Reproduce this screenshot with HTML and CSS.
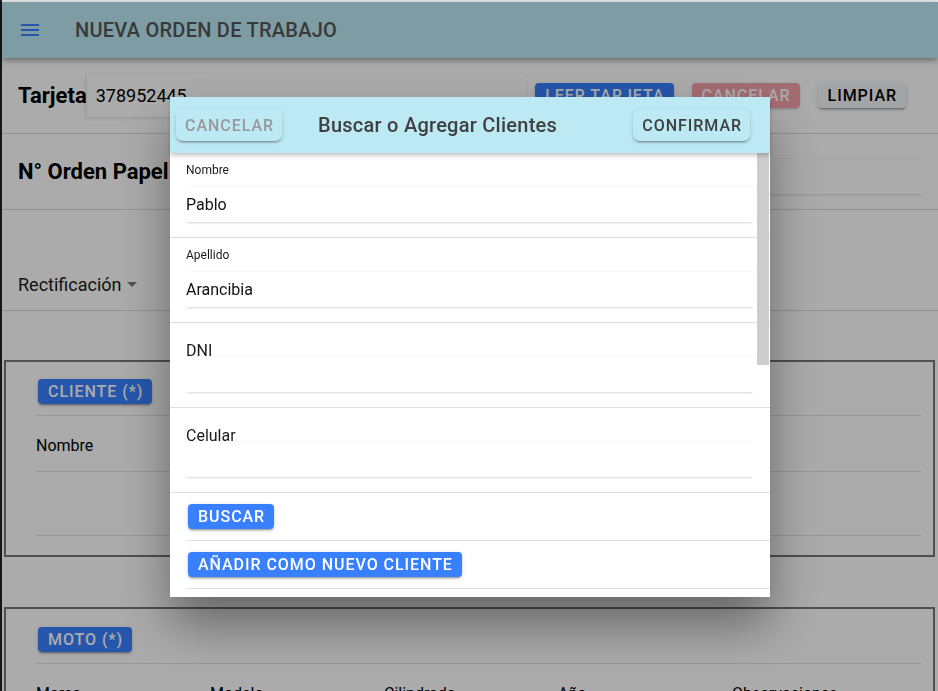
FILE: index.html
```html
<!DOCTYPE html>
<html lang="es">
<head>
<meta charset="utf-8">
<title>Nueva orden de trabajo</title>
<link rel="stylesheet" href="styles.css">
</head>
<body>
<div class="app">
  <header class="toolbar">
    <span class="menu-btn">
      <svg width="18" height="12" viewBox="0 0 18 12"><rect x="0" y="0" width="18" height="2"/><rect x="0" y="5" width="18" height="2"/><rect x="0" y="10" width="18" height="2"/></svg>
    </span>
    <h1 class="toolbar-title">NUEVA ORDEN DE TRABAJO</h1>
  </header>
  <main class="content">
    <div class="row row-tarjeta">
      <span class="row-label">Tarjeta</span>
      <div class="card-input">378952445</div>
      <div class="row-actions">
        <button class="btn btn-primary">LEER TARJETA</button>
        <button class="btn btn-danger">CANCELAR</button>
        <button class="btn btn-light">LIMPIAR</button>
      </div>
    </div>
    <div class="row row-orden">
      <span class="row-label">N° Orden Papel</span>
      <div class="line-input"></div>
    </div>
    <div class="row row-rect">
      <span class="select">Rectificación<span class="caret"></span></span>
    </div>
    <section class="panel">
      <div class="panel-head"><button class="btn btn-primary">CLIENTE (*)</button></div>
      <div class="panel-row">Nombre</div>
      <div class="panel-row panel-empty"></div>
    </section>
    <section class="panel panel-moto">
      <div class="panel-head"><button class="btn btn-primary">MOTO (*)</button></div>
      <div class="panel-cols">
        <span>Marca</span><span>Modelo</span><span>Cilindrada</span><span>Año</span><span>Observaciones</span>
      </div>
    </section>
  </main>
</div>
<div class="scrim"></div>
<div class="modal">
  <div class="modal-header">
    <button class="hbtn hbtn-muted">CANCELAR</button>
    <h2 class="modal-title">Buscar o Agregar Clientes</h2>
    <button class="hbtn">CONFIRMAR</button>
  </div>
  <div class="modal-body">
    <div class="field">
      <div class="field-label">Nombre</div>
      <div class="field-input">Pablo</div>
    </div>
    <div class="field">
      <div class="field-label">Apellido</div>
      <div class="field-input">Arancibia</div>
    </div>
    <div class="field">
      <div class="field-label field-label-empty">DNI</div>
      <div class="field-input"></div>
    </div>
    <div class="field">
      <div class="field-label field-label-empty">Celular</div>
      <div class="field-input"></div>
    </div>
    <div class="action-row"><button class="btn btn-primary">BUSCAR</button></div>
    <div class="action-row"><button class="btn btn-primary">AÑADIR COMO NUEVO CLIENTE</button></div>
    <div class="scroll-thumb"></div>
  </div>
</div>
</body>
</html>
```
FILE: styles.css
```css
* { box-sizing: border-box; }
html, body { height: 100%; overflow: hidden; }
body {
  margin: 0;
  padding-left: 2px;
  background: #222;
  font-family: Roboto, "Noto Sans", Arial, sans-serif;
  color: #000;
}
.app {
  background: #fff;
  border-top: 2px solid #e6e6e6;
  height: 100%;
}

/* toolbar */
.toolbar {
  height: 56px;
  background: #bde9f4;
  display: flex;
  align-items: center;
  position: relative;
  z-index: 1;
  box-shadow: 0 2px 4px -1px rgba(0,0,0,.2), 0 4px 5px 0 rgba(0,0,0,.14), 0 1px 10px 0 rgba(0,0,0,.12);
}
.menu-btn { margin-left: 19px; display: flex; }
.menu-btn svg { display: block; fill: #3880ff; }
.toolbar-title {
  margin: 0 0 0 36px;
  font-size: 20px;
  font-weight: 500;
  letter-spacing: .0125em;
  color: #565656;
}

/* buttons */
.btn {
  font-family: inherit;
  font-size: 16px;
  font-weight: 500;
  letter-spacing: .06em;
  height: 25px;
  padding: 0 9px 0 10px;
  border: 0;
  border-radius: 4px;
  display: inline-flex;
  align-items: center;
  justify-content: center;
  white-space: nowrap;
  box-shadow: 0 3px 1px -2px rgba(0,0,0,.2), 0 2px 2px 0 rgba(0,0,0,.14), 0 1px 5px 0 rgba(0,0,0,.12);
}
.btn-primary { background: #3880ff; color: #fff; }
.btn-danger { background: #eb445a; color: #fff; opacity: .5; }
.btn-light { background: #f4f5f8; color: #000; }

/* rows */
.row {
  display: flex;
  align-items: center;
  padding-left: 16px;
  border-bottom: 1px solid #d8d8d8;
}
.row-label { font-size: 22px; font-weight: 700; }
.row-tarjeta { height: 76px; }
.card-input {
  width: 439px;
  height: 43px;
  display: flex;
  align-items: center;
  padding-left: 9px;
  font-size: 18px;
  background: #fff;
  box-shadow: -1px 1px 4px rgba(0,0,0,.14);
}
.row-actions {
  margin-left: auto;
  margin-right: 32px;
  display: flex;
  gap: 18px;
}
.row-orden { height: 76px; }
.line-input {
  align-self: flex-start;
  margin: 24px 16px 0 12px;
  flex: 1;
  height: 36px;
  border-top: 1px solid #f7f7f7;
  box-shadow: 0 2px 2px -1px rgba(0,0,0,.16);
}
.row-rect { height: 101px; align-items: flex-start; }
.select {
  margin-top: 64px;
  font-size: 18px;
  line-height: 21px;
  display: inline-flex;
  align-items: center;
  color: #1a1a1a;
}
.caret {
  margin-left: 5px;
  width: 0;
  height: 0;
  border-left: 5px solid transparent;
  border-right: 5px solid transparent;
  border-top: 5px solid #7a7a7a;
}

/* panels */
.panel {
  margin: 49px 3px 0 2px;
  border: 2px solid #767676;
  padding: 0 12px 19px 30px;
}
.panel-moto { margin-top: 50px; }
.panel-head {
  padding-top: 17px;
  padding-bottom: 11px;
  border-bottom: 1px solid #e2e2e2;
}
.panel-moto .panel-head { padding-top: 18px; }
.panel-head .btn { margin-left: 2px; }
.panel-row {
  padding: 20px 0 16px;
  font-size: 16px;
  line-height: 19px;
  border-bottom: 1px solid #e2e2e2;
}
.panel-empty { height: 64px; padding: 0; }
.panel-cols {
  display: grid;
  grid-template-columns: repeat(5, 174px);
  padding-top: 20px;
  font-size: 16px;
  line-height: 19px;
}

/* scrim + modal */
.scrim {
  position: fixed;
  top: 2px;
  left: 0;
  width: 100%;
  height: 100%;
  z-index: 5;
  background-color: rgba(0,0,0,.33);
}
.modal {
  position: fixed;
  z-index: 10;
  left: 170px;
  top: 97px;
  width: 600px;
  height: 500px;
  background: #fff;
  display: flex;
  flex-direction: column;
  box-shadow: 0 28px 48px rgba(0,0,0,.4);
}
.modal-header {
  height: 56px;
  flex: none;
  background: #bde9f4;
  display: flex;
  align-items: center;
  position: relative;
  z-index: 2;
  box-shadow: 0 2px 4px -1px rgba(0,0,0,.2), 0 4px 5px 0 rgba(0,0,0,.1);
}
.hbtn {
  font-family: inherit;
  font-size: 16px;
  font-weight: 500;
  letter-spacing: .06em;
  height: 32px;
  padding: 0 8px 0 9px;
  border: 0;
  border-radius: 7px;
  background: #bde9f4;
  color: #404040;
  box-shadow: 0 3px 1px -2px rgba(0,0,0,.2), 0 2px 2px 0 rgba(0,0,0,.14), 0 1px 5px 0 rgba(0,0,0,.12);
}
.hbtn-muted { color: #999; margin-left: 6px; }
.hbtn:last-child { margin-right: 20px; }
.modal-title {
  flex: 1;
  margin: 0 0 0 36px;
  font-size: 20px;
  font-weight: 500;
  letter-spacing: .0125em;
  color: #404040;
}
.modal-body {
  flex: 1;
  position: relative;
  overflow: hidden;
}
.field {
  height: 85px;
  padding: 10px 17px 0 16px;
  border-bottom: 1px solid #dedede;
}
.field-label {
  font-size: 12px;
  line-height: 14px;
  margin-bottom: 9px;
  color: #1a1a1a;
}
.field-label-empty {
  font-size: 16px;
  line-height: 19px;
  margin: 8px 0 -4px;
}
.field-input {
  height: 36px;
  display: flex;
  align-items: center;
  font-size: 16px;
  color: #111;
  border-top: 1px solid #f8f8f8;
  box-shadow: 0 2px 2px -1px rgba(0,0,0,.16);
}
.action-row {
  margin-left: 16px;
  padding: 11px 0 11px 2px;
  border-bottom: 1px solid #dedede;
}
.scroll-thumb {
  position: absolute;
  top: 0;
  right: 1px;
  width: 12px;
  height: 212px;
  background: #cdcdcd;
}
```
